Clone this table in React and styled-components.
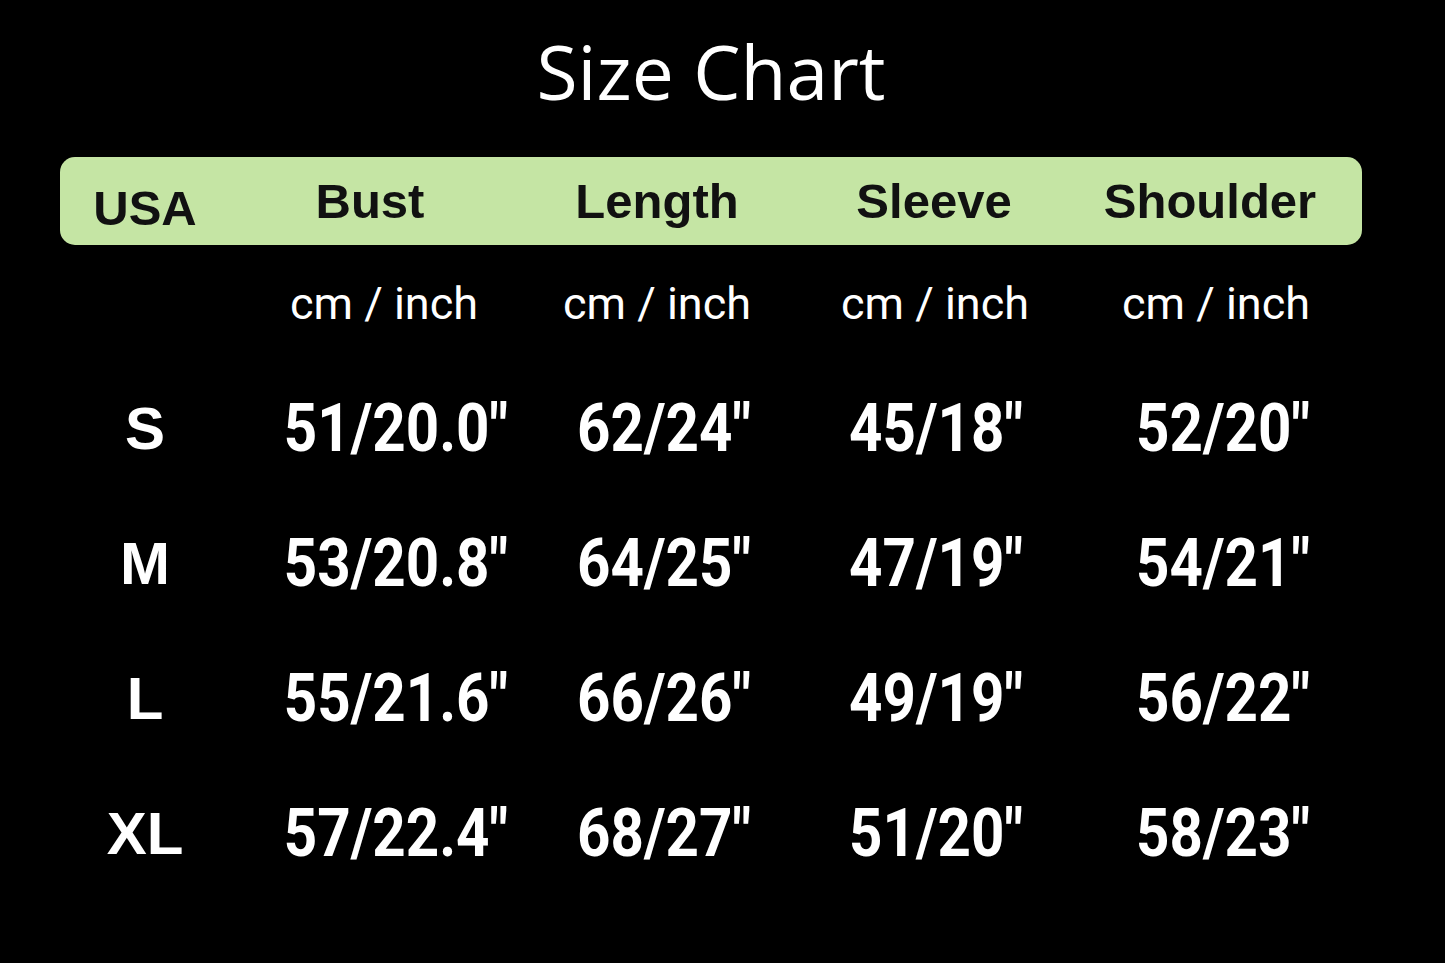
import React from "react";
import styled, { createGlobalStyle } from "styled-components";

const GlobalStyle = createGlobalStyle`
  html, body {
    margin: 0;
    padding: 0;
    background: #000;
  }
`;

const Page = styled.div`
  width: 1445px;
  height: 963px;
  background: #000;
  padding: 26px 0 0 60px;
  box-sizing: border-box;
  overflow: hidden;
`;

const Chart = styled.div`
  width: 1302px;
  display: flex;
  flex-direction: column;
`;

const Title = styled.h1`
  margin: 0 0 41px;
  height: 90px;
  line-height: 90px;
  text-align: center;
  color: #fff;
  font-family: "Open Sans", sans-serif;
  font-weight: 400;
  font-size: 75px;
`;

const HeaderBar = styled.div`
  display: grid;
  grid-template-columns: 170px 280px 294px 260px 292px;
  height: 88px;
  background: #c5e5a4;
  border-radius: 15px;
  box-sizing: border-box;
`;

const HeaderCell = styled.div`
  line-height: 88px;
  padding-top: ${(p) => p.$drop || 0}px;
  text-align: center;
  color: #111;
  font-family: "Liberation Sans", Arial, sans-serif;
  font-weight: 700;
  font-size: 49px;
  white-space: nowrap;
`;

const Row = styled.div`
  display: grid;
  grid-template-columns: ${(p) => p.$cols};
  height: ${(p) => p.$height}px;
  margin-top: ${(p) => p.$gap || 0}px;
`;

const UnitCell = styled.div`
  line-height: 60px;
  text-align: center;
  color: #fff;
  font-family: Roboto, "Liberation Sans", sans-serif;
  font-size: 45px;
  white-space: nowrap;
`;

const SizeCell = styled.div`
  line-height: 135px;
  text-align: center;
  color: #fff;
  font-family: "Liberation Sans", Arial, sans-serif;
  font-weight: 700;
  font-size: 60px;
`;

const ValueCell = styled.div`
  line-height: 135px;
  text-align: center;
  white-space: nowrap;
`;

const Value = styled.span`
  display: inline-block;
  color: #fff;
  font-family: Roboto, "Liberation Sans", sans-serif;
  font-weight: 700;
  font-size: 67px;
  transform: scaleX(0.87);
`;

const headers = ["Bust", "Length", "Sleeve", "Shoulder"];

const unitCols = "170px 308px 238px 318px 244px";
const valueCols = "170px 332px 204px 340px 234px";

const sizes = [
  { size: "S", values: ['51/20.0"', '62/24"', '45/18"', '52/20"'] },
  { size: "M", values: ['53/20.8"', '64/25"', '47/19"', '54/21"'] },
  { size: "L", values: ['55/21.6"', '66/26"', '49/19"', '56/22"'] },
  { size: "XL", values: ['57/22.4"', '68/27"', '51/20"', '58/23"'] }
];

const App = () => (
  <>
    <GlobalStyle />
    <Page>
      <Chart>
        <Title>Size Chart</Title>
        <HeaderBar>
          <HeaderCell $drop={7}>USA</HeaderCell>
          {headers.map((h) => (
            <HeaderCell key={h}>{h}</HeaderCell>
          ))}
        </HeaderBar>
        <Row $cols={unitCols} $height={60} $gap={29}>
          <div />
          {headers.map((h) => (
            <UnitCell key={h}>cm / inch</UnitCell>
          ))}
        </Row>
        {sizes.map((s, i) => (
          <Row key={s.size} $cols={valueCols} $height={135} $gap={i === 0 ? 27 : 0}>
            <SizeCell>{s.size}</SizeCell>
            {s.values.map((v, j) => (
              <ValueCell key={j}>
                <Value>{v}</Value>
              </ValueCell>
            ))}
          </Row>
        ))}
      </Chart>
    </Page>
  </>
);

export default App;
